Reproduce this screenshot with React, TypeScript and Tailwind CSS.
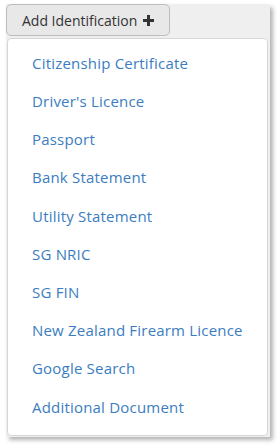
const items = [
  "Citizenship Certificate",
  "Driver's Licence",
  "Passport",
  "Bank Statement",
  "Utility Statement",
  "SG NRIC",
  "SG FIN",
  "New Zealand Firearm Licence",
  "Google Search",
  "Additional Document",
];

const App = () => {
  return (
    <div className="w-[280px] h-[445px] bg-white pl-[6px] pt-[4px] font-['Open_Sans',sans-serif]">
      <div className="w-[264px] bg-[#efefef] rounded-tr-[3px] shadow-[3px_3px_4px_rgba(0,0,0,0.3)]">
        <button
          type="button"
          className="flex items-center gap-[6px] h-[32px] w-[164px] pl-[15px] bg-[#e8e8e8] border border-[#bdbdbd] rounded-[5px] text-[14px] text-[#333]"
        >
          Add Identification
          <svg width="11" height="11" viewBox="0 0 11 11" className="mt-[1px]">
            <path d="M4 0h3v4h4v3H7v4H4V7H0V4h4z" fill="#333" />
          </svg>
        </button>
        <div className="mt-[2px] ml-[1px] mr-[2px] pb-[1px]">
          <ul className="bg-white border border-[#d6d6d6] rounded-[4px] pt-[5px] pb-[9px]">
            {items.map((item) => (
              <li
                key={item}
                className="h-[38.2px] flex items-center pl-[24px] text-[15px] tracking-[0.2px] text-[#3b7dc0] cursor-pointer"
              >
                {item}
              </li>
            ))}
          </ul>
        </div>
      </div>
    </div>
  );
};

export default App;
